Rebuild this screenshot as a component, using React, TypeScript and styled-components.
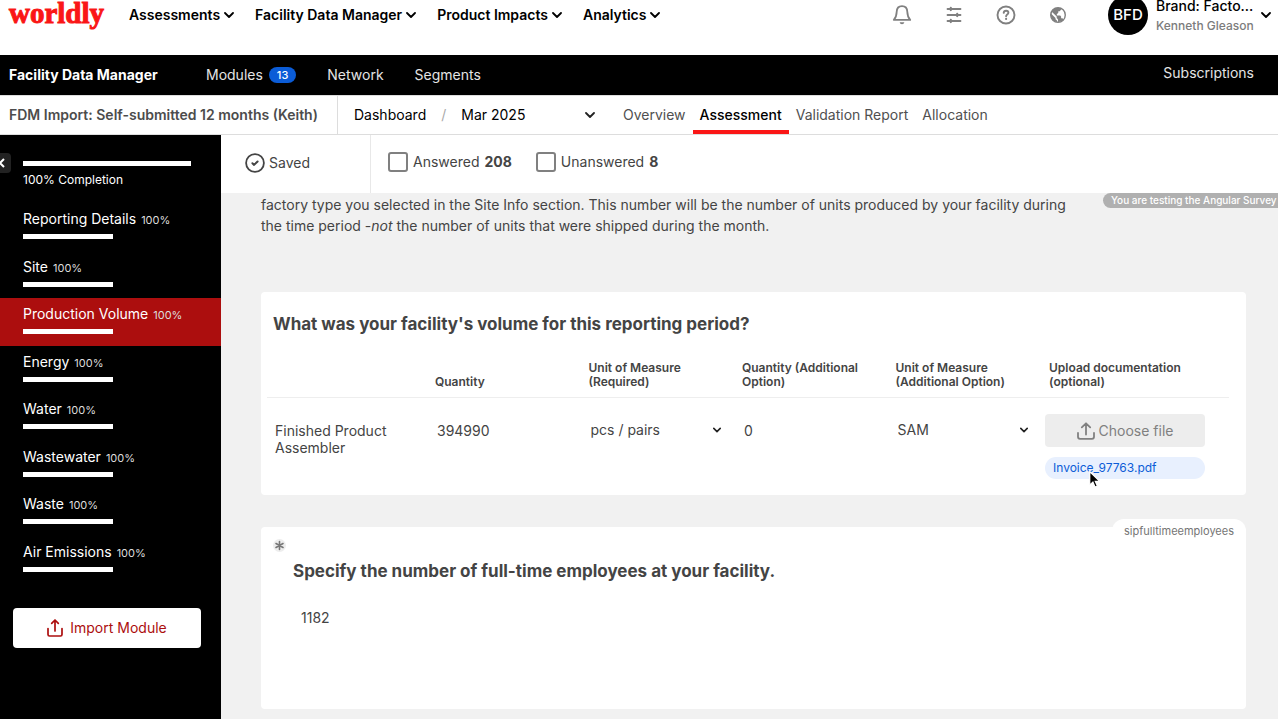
import React from "react";
import styled, { createGlobalStyle, css } from "styled-components";

const GlobalStyle = createGlobalStyle`
  * { box-sizing: border-box; }
  html, body, #root { margin: 0; min-height: 100vh; }
  body {
    font-family: Inter, "Liberation Sans", sans-serif;
    font-size: 14px;
    line-height: 20px;
    color: #444;
    background: #f1f1f1;
    overflow: hidden;
  }
  button, input, select { font: inherit; color: inherit; margin: 0; padding: 0; border: 0; background: none; }
  button { cursor: pointer; }
  a { color: inherit; text-decoration: none; }
  h1, h2, p, ul { margin: 0; padding: 0; }
  ul { list-style: none; }
  svg { display: block; flex: none; }
`;

const Page = styled.div`
  position: relative;
  display: flex;
  flex-direction: column;
  height: 100vh;
  overflow: hidden;
`;

/* Global header */
const Header = styled.header`
  display: flex;
  align-items: center;
  height: 55px;
  padding: 0 7px 25px 9px;
  background: #fff;
  color: #000;
`;
const Logo = styled.a`
  width: 96px;
  padding-bottom: 5px;
  font: 700 29px/30px "Liberation Serif", serif;
  color: #fa1616;
  -webkit-text-stroke: 1px #fa1616;
`;
const MainNav = styled.nav`
  display: flex;
  gap: 21px;
  margin-left: 24px;
  flex: 1;
`;
const MainNavButton = styled.button`
  display: flex;
  align-items: center;
  gap: 4px;
  font-weight: 600;
  white-space: nowrap;
`;
const HeaderIcons = styled.div`
  display: flex;
  gap: 28px;
  margin-right: 38px;
`;
const IconButton = styled.button`
  display: grid;
  place-items: center;
  width: 24px;
  height: 24px;
  color: #808080;
`;
const Account = styled.button`
  display: flex;
  align-items: center;
  gap: 8px;
  text-align: left;
`;
const Avatar = styled.span`
  display: grid;
  place-items: center;
  width: 40px;
  height: 40px;
  border-radius: 50%;
  background: #000;
  color: #fff;
  font-size: 15px;
  font-weight: 500;
`;
const AccountText = styled.span`
  display: flex;
  flex-direction: column;
  width: 97px;
  padding-top: 2px;
  white-space: nowrap;
`;
const AccountBrand = styled.span`
  font-weight: 500;
`;
const AccountName = styled.span`
  font-size: 12px;
  font-weight: 500;
  color: #7c7c7c;
`;

/* Product bar */
const ProductBar = styled.nav`
  display: flex;
  align-items: center;
  height: 40px;
  padding: 0 24px 0 9px;
  background: #000;
  color: #e4e4e4;
`;
const ProductName = styled.a`
  width: 197px;
  font-weight: 700;
  color: #fff;
  white-space: nowrap;
`;
const ProductLink = styled.a`
  display: flex;
  align-items: center;
  gap: 6px;
  margin-right: 31px;
`;
const Badge = styled.span`
  padding: 0 8px;
  border-radius: 8px;
  background: #0b5cd7;
  color: #fff;
  font-size: 11px;
  font-weight: 500;
  line-height: 16px;
`;
const Subscriptions = styled.a`
  margin-left: auto;
  padding-bottom: 4px;
`;

/* Assessment bar */
const AssessmentBar = styled.div`
  display: flex;
  height: 40px;
  border-top: 1px solid #ddd;
  border-bottom: 1px solid #ddd;
  background: #fff;
  white-space: nowrap;
`;
const AssessmentTitle = styled.h1`
  width: 338px;
  padding-left: 9px;
  border-right: 1px solid #ddd;
  font-size: 14px;
  font-weight: 600;
  line-height: 38px;
  color: #4c4c4c;
`;
const Crumbs = styled.div`
  display: flex;
  align-items: center;
  gap: 15px;
  width: 278px;
  padding-left: 16px;
  color: #000;
`;
const Slash = styled.span`
  color: #aaa;
`;
const Tabs = styled.nav`
  display: flex;
`;
const Tab = styled.a<{ $active?: boolean }>`
  padding: 2px 7px 0;
  line-height: 34px;
  border-bottom: 4px solid transparent;
  color: #505050;
  ${(p) => p.$active && css`
    border-color: #fa1616;
    color: #000;
    font-weight: 500;
  `}
`;

/* Selects */
const SelectBox = styled.div<{ $width: number }>`
  position: relative;
  width: ${(p) => p.$width}px;
  svg {
    position: absolute;
    right: 0;
    top: 50%;
    translate: 0 -50%;
    pointer-events: none;
    color: #222;
  }
`;
const Select = styled.select`
  display: block;
  appearance: none;
  width: 100%;
  height: 24px;
`;

/* Body */
const Body = styled.div`
  display: flex;
  flex: 1;
  min-height: 0;
`;
const Sidebar = styled.aside`
  position: relative;
  width: 221px;
  flex: none;
  padding-top: 26px;
  background: #000;
  color: #fff;
`;
const Collapse = styled.button`
  position: absolute;
  left: -9px;
  top: 18px;
  display: grid;
  place-items: center;
  width: 20px;
  height: 20px;
  border-radius: 4px;
  background: #222;
`;
const Completion = styled.div`
  padding: 0 30px 14px 23px;
  font-size: 12px;
  line-height: 18px;
`;
const Bar = styled.div<{ $full?: boolean }>`
  width: ${(p) => (p.$full ? "100%" : "90px")};
  height: 5px;
  margin-bottom: ${(p) => (p.$full ? "5px" : "0")};
  background: #fff;
`;
const SectionList = styled.ul`
  display: grid;
  grid-auto-rows: 1fr;
  height: 380px;
`;
const SectionRow = styled.li<{ $active?: boolean }>`
  background: ${(p) => (p.$active ? "#ac0e0e" : "none")};
`;
const SectionLink = styled.a`
  display: block;
  padding: 6px 23px 0;
`;
const SectionLabel = styled.span`
  display: flex;
  align-items: baseline;
  gap: 5px;
  margin-bottom: 4px;
`;
const Percent = styled.span`
  font-size: 11px;
  color: #ddd;
`;
const ImportButton = styled.button`
  display: flex;
  align-items: center;
  justify-content: center;
  gap: 7px;
  width: 188px;
  height: 40px;
  margin: 25px 0 0 13px;
  border-radius: 4px;
  background: #fff;
  color: #ac0e0e;
`;

const Main = styled.main`
  position: relative;
  flex: 1;
  min-width: 0;
`;
const FilterBar = styled.div`
  display: flex;
  height: 58px;
  background: #fff;
`;
const Saved = styled.div`
  display: flex;
  align-items: center;
  gap: 4px;
  width: 150px;
  padding: 0 0 3px 24px;
  border-right: 1px solid #e8e8e8;
`;
const Filters = styled.div`
  display: flex;
  align-items: center;
  gap: 24px;
  padding: 0 0 4px 17px;
`;
const FilterLabel = styled.label`
  display: flex;
  align-items: center;
  gap: 5px;
`;
const Checkbox = styled.input`
  appearance: none;
  width: 20px;
  height: 20px;
  border: 2px solid #808080;
  border-radius: 3px;
`;
const TestTag = styled.div`
  position: absolute;
  right: 0;
  top: 58px;
  width: 175px;
  padding-left: 8px;
  border-radius: 8px 0 0 8px;
  background: #b0b0b0;
  color: #fff;
  font-size: 10px;
  font-weight: 500;
  line-height: 15px;
  white-space: nowrap;
`;
const Content = styled.div`
  padding: 1px 32px 10px 40px;
`;
const Intro = styled.p`
  max-width: 820px;
  margin-bottom: 56px;
  line-height: 21px;
`;
const Card = styled.section`
  position: relative;
  border-radius: 4px;
  background: #fff;
`;
const VolumeCard = styled(Card)`
  padding: 20px 17px 0 6px;
  min-height: 203px;
  margin-bottom: 32px;
`;
const Question = styled.h2`
  padding-left: 6px;
  font-size: 17px;
  font-weight: 700;
  line-height: 24px;
`;
const Table = styled.table`
  width: 100%;
  margin-top: 25px;
  table-layout: fixed;
  border-collapse: collapse;
`;
const Col = styled.col<{ $width?: number }>`
  width: ${(p) => (p.$width ? `${p.$width}px` : "auto")};
`;
const Th = styled.th`
  padding: 0 8px 8px;
  border-bottom: 1px solid #eee;
  font-size: 12px;
  font-weight: 600;
  line-height: 14px;
  text-align: left;
  vertical-align: bottom;
`;
const Td = styled.td`
  padding: 20px 10px 0;
  vertical-align: top;
`;
const RowName = styled.th`
  padding: 24px 8px 0;
  font-weight: 400;
  line-height: 17px;
  text-align: left;
  vertical-align: top;
`;
const UploadCell = styled.td`
  padding: 16px 4px 0;
  vertical-align: top;
`;
const TextInput = styled.input`
  display: block;
  width: 100%;
  height: 24px;
  background: none;
`;
const ChooseFile = styled.button`
  display: flex;
  align-items: center;
  justify-content: center;
  gap: 4px;
  width: 160px;
  height: 33px;
  border-radius: 4px;
  background: #ededed;
  color: #808080;
`;
const FileLink = styled.a`
  display: block;
  width: 160px;
  margin-top: 10px;
  padding-left: 8px;
  border-radius: 11px;
  background: #e8f0fe;
  color: #0b5cd7;
  font-size: 12px;
  line-height: 22px;
`;
const EmployeesCard = styled(Card)`
  min-height: 182px;
  padding: 32px 32px 0;
`;
const FieldTag = styled.span`
  position: absolute;
  right: 0;
  top: -8px;
  padding: 2px 12px;
  border-radius: 12px 12px 0 0;
  background: #fff;
  color: #757575;
  font-size: 11px;
`;
const Required = styled.span`
  position: absolute;
  left: 12px;
  top: 12px;
  display: grid;
  place-items: center;
  width: 13px;
  height: 13px;
  border-radius: 50%;
  background: #ededed;
  color: #777;
`;
const EmployeesLabel = styled.label`
  display: block;
  font-size: 17px;
  font-weight: 700;
  line-height: 24px;
`;
const EmployeesInput = styled(TextInput)`
  width: 240px;
  margin: 22px 0 0 8px;
`;
const Pointer = styled.svg`
  position: absolute;
  left: 867px;
  top: 335px;
  pointer-events: none;
`;

const Chevron = ({ size = 10, weight = 2 }: { size?: number; weight?: number }) => (
  <svg width={size} height={size} viewBox="0 0 10 10" fill="none" stroke="currentColor" strokeWidth={weight} strokeLinecap="round" strokeLinejoin="round" aria-hidden>
    <path d="M1 3l4 4 4-4" />
  </svg>
);
const ImportIcon = () => (
  <svg width="16" height="18" viewBox="0 0 16 18" fill="none" stroke="currentColor" strokeWidth="1.7" strokeLinecap="round" strokeLinejoin="round" aria-hidden>
    <path d="M8 12V1.500M4.700 4.300L8 1l3.300 3.300M1 9.500v6a1.500 1.500 0 0 0 1.500 1.500h11a1.500 1.500 0 0 0 1.500-1.500v-6" />
  </svg>
);
const UploadIcon = () => (
  <svg width="18" height="18" viewBox="0 0 18 18" fill="none" stroke="currentColor" strokeWidth="1.8" strokeLinecap="round" strokeLinejoin="round" aria-hidden>
    <path d="M9 12.500V1.800M4.800 5.400L9 1.300l4.200 4.100M1 11v3.800a2 2 0 0 0 2 2h12a2 2 0 0 0 2-2V11" />
  </svg>
);
const BellIcon = () => (
  <svg width="20" height="22" viewBox="0 0 20 22" fill="none" stroke="currentColor" strokeWidth="1.800" strokeLinejoin="round" aria-hidden>
    <path d="M10 2.200c-3.400 0-5.200 2.400-5.300 5.600-.1 3.200-.5 5.600-2.900 8.100h16.400c-2.400-2.500-2.800-4.900-2.900-8.100-.1-3.200-1.900-5.600-5.300-5.600z" />
    <path d="M7.600 18.200a2.450 2.450 0 0 0 4.800 0z" fill="currentColor" stroke="none" />
  </svg>
);
const SlidersIcon = () => (
  <svg width="16" height="18" viewBox="0 0 16 18" fill="currentColor" stroke="currentColor" strokeWidth="1.800" strokeLinecap="round" aria-hidden>
    <path d="M1.500 3h13M1.500 9h13M1.500 15h13" />
    <path d="M4.800 1.900v2.200M11.200 7.900v2.200M4.800 13.900v2.200" strokeWidth="2.200" />
  </svg>
);
const HelpIcon = () => (
  <svg width="20" height="20" viewBox="0 0 20 20" fill="none" stroke="currentColor" strokeWidth="1.900" strokeLinecap="round" aria-hidden>
    <circle cx="10" cy="10" r="8.500" />
    <path d="M7.700 7.900c.1-1.400 1.100-2.200 2.400-2.200s2.300.8 2.300 2c0 1.700-2.300 1.800-2.300 3.500" />
    <circle cx="10.100" cy="13.900" r="1.100" fill="currentColor" stroke="none" />
  </svg>
);
const GlobeIcon = () => (
  <svg width="16" height="16" viewBox="0 0 16 16" aria-hidden>
    <circle cx="8" cy="8" r="7.300" fill="none" stroke="currentColor" strokeWidth="1.400" />
    <path fill="currentColor" d="M1 6.500L5.500 11v1.200l1.500 1.300V15C3.500 14.600.8 11.700.8 8zM1 6C2 3.500 3.800 1.500 6 1l2.500-.2L11 1.500v1.300L9.700 4.200H8.300v1.500L6.800 7.200v1.200h3.400l.9 1v1.900h1.400l.9 1.300C11.800 14.400 10 15 8 15v-2.500l-1.300-1.400V9.500L2.300 5.200z" />
  </svg>
);
const SavedIcon = () => (
  <svg width="20" height="20" viewBox="0 0 20 20" fill="none" stroke="currentColor" strokeWidth="1.800" strokeLinecap="round" strokeLinejoin="round" aria-hidden>
    <circle cx="10" cy="10" r="8.900" />
    <path d="M7.400 10.300l1.700 1.600 3.500-3.400" strokeWidth="2" />
  </svg>
);

const mainNav = ["Assessments", "Facility Data Manager", "Product Impacts", "Analytics"];
const tabs = ["Overview", "Assessment", "Validation Report", "Allocation"];
const sections = ["Reporting Details", "Site", "Production Volume", "Energy", "Water", "Wastewater", "Waste", "Air Emissions"];
const columns = ["Quantity", "Unit of Measure (Required)", "Quantity (Additional Option)", "Unit of Measure (Additional Option)", "Upload documentation (optional)"];

export default function App() {
  return (
    <Page>
      <GlobalStyle />
      <Header>
        <Logo href="#">worldly</Logo>
        <MainNav>
          {mainNav.map((item) => (
            <MainNavButton key={item}>
              {item}
              <Chevron weight={1.8} />
            </MainNavButton>
          ))}
        </MainNav>
        <HeaderIcons>
          <IconButton aria-label="Notifications"><BellIcon /></IconButton>
          <IconButton aria-label="Settings"><SlidersIcon /></IconButton>
          <IconButton aria-label="Help"><HelpIcon /></IconButton>
          <IconButton aria-label="Language"><GlobeIcon /></IconButton>
        </HeaderIcons>
        <Account>
          <Avatar>BFD</Avatar>
          <AccountText>
            <AccountBrand>Brand: Facto...</AccountBrand>
            <AccountName>Kenneth Gleason</AccountName>
          </AccountText>
          <Chevron weight={1.8} />
        </Account>
      </Header>

      <ProductBar>
        <ProductName href="#">Facility Data Manager</ProductName>
        <ProductLink href="#">Modules <Badge>13</Badge></ProductLink>
        <ProductLink href="#">Network</ProductLink>
        <ProductLink href="#">Segments</ProductLink>
        <Subscriptions href="#">Subscriptions</Subscriptions>
      </ProductBar>

      <AssessmentBar>
        <AssessmentTitle>FDM Import: Self-submitted 12 months (Keith)</AssessmentTitle>
        <Crumbs>
          <a href="#">Dashboard</a>
          <Slash>/</Slash>
          <SelectBox $width={134}>
            <Select aria-label="Reporting month"><option>Mar 2025</option></Select>
            <Chevron weight={1.8} />
          </SelectBox>
        </Crumbs>
        <Tabs>
          {tabs.map((tab) => (
            <Tab key={tab} href="#" $active={tab === "Assessment"}>{tab}</Tab>
          ))}
        </Tabs>
      </AssessmentBar>

      <Body>
        <Sidebar>
          <Collapse aria-label="Collapse sidebar">
            <svg width="10" height="10" viewBox="0 0 10 10" fill="none" stroke="currentColor" strokeWidth="2"><path d="M8 1L4 5l4 4" /></svg>
          </Collapse>
          <Completion>
            <Bar $full />
            100% Completion
          </Completion>
          <SectionList>
            {sections.map((section) => (
              <SectionRow key={section} $active={section === "Production Volume"}>
                <SectionLink href="#">
                  <SectionLabel>{section} <Percent>100%</Percent></SectionLabel>
                  <Bar />
                </SectionLink>
              </SectionRow>
            ))}
          </SectionList>
          <ImportButton><ImportIcon />Import Module</ImportButton>
        </Sidebar>

        <Main>
          <FilterBar>
            <Saved><SavedIcon />Saved</Saved>
            <Filters>
              <FilterLabel><Checkbox type="checkbox" />Answered <b>208</b></FilterLabel>
              <FilterLabel><Checkbox type="checkbox" />Unanswered <b>8</b></FilterLabel>
            </Filters>
          </FilterBar>
          <TestTag>You are testing the Angular Survey</TestTag>
          <Content>
            <Intro>
              factory type you selected in the Site Info section. This number will be the number of units produced by your facility during the time period -<em>not</em> the number of units that were shipped during the month.
            </Intro>
            <VolumeCard>
              <Question>What was your facility's volume for this reporting period?</Question>
              <Table>
                <colgroup>
                  <Col $width={160} />
                  <Col />
                  <Col />
                  <Col />
                  <Col />
                  <Col $width={188} />
                </colgroup>
                <thead>
                  <tr>
                    <Th as="td" />
                    {columns.map((column) => <Th key={column} scope="col">{column}</Th>)}
                  </tr>
                </thead>
                <tbody>
                  <tr>
                    <RowName scope="row">Finished Product Assembler</RowName>
                    <Td><TextInput aria-label="Quantity" defaultValue="394990" /></Td>
                    <Td>
                      <SelectBox $width={130}>
                        <Select aria-label="Unit of measure"><option>pcs / pairs</option></Select>
                        <Chevron size={8} weight={2} />
                      </SelectBox>
                    </Td>
                    <Td><TextInput aria-label="Additional quantity" defaultValue="0" /></Td>
                    <Td>
                      <SelectBox $width={130}>
                        <Select aria-label="Additional unit of measure"><option>SAM</option></Select>
                        <Chevron size={8} weight={2} />
                      </SelectBox>
                    </Td>
                    <UploadCell>
                      <ChooseFile><UploadIcon />Choose file</ChooseFile>
                      <FileLink href="#">Invoice_97763.pdf</FileLink>
                    </UploadCell>
                  </tr>
                </tbody>
              </Table>
            </VolumeCard>
            <EmployeesCard>
              <FieldTag>sipfulltimeemployees</FieldTag>
              <Required>
                <svg width="11" height="11" viewBox="0 0 11 11" stroke="currentColor" strokeWidth="1.600" strokeLinecap="round"><path d="M5.500 1.500v8M2 3.500l7 4M9 3.500l-7 4" /></svg>
              </Required>
              <EmployeesLabel htmlFor="employees">Specify the number of full-time employees at your facility.</EmployeesLabel>
              <EmployeesInput id="employees" defaultValue="1182" />
            </EmployeesCard>
          </Content>
          <Pointer width="14" height="19" viewBox="0 0 13 18" aria-hidden>
            <path d="M1.500 1.500v12.800l3-2.800 2 4.700 2.300-1-2-4.500h4.200z" fill="#000" stroke="#fff" strokeWidth="1.200" />
          </Pointer>
        </Main>
      </Body>
    </Page>
  );
}
